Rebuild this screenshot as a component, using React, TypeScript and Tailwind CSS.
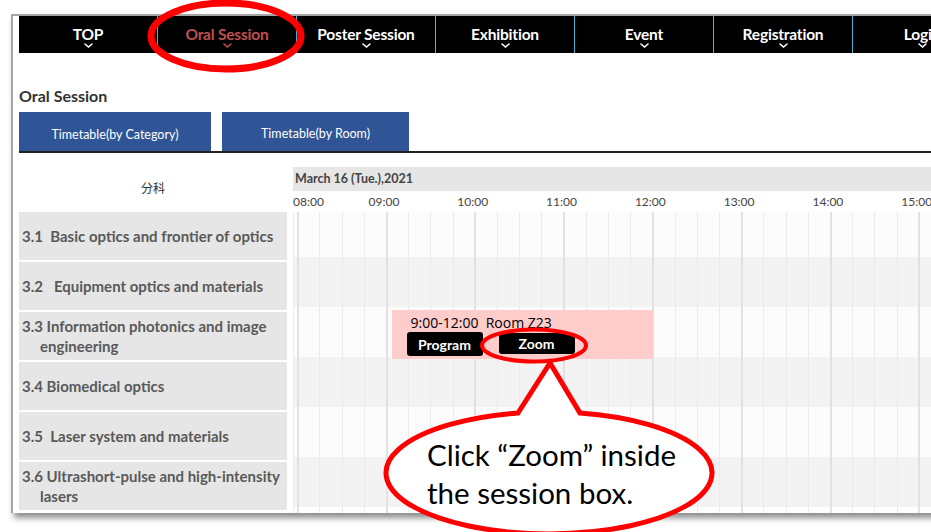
import React from 'react';

const NAV = ['TOP', 'Oral Session', 'Poster Session', 'Exhibition', 'Event', 'Registration', 'Login'];

const CATEGORIES = [
  { label: '3.1  Basic optics and frontier of optics' },
  { label: '3.2   Equipment optics and materials' },
  { label: '3.3 Information photonics and image engineering' },
  { label: '3.4 Biomedical optics' },
  { label: '3.5  Laser system and materials' },
  { label: '3.6 Ultrashort-pulse and high-intensity lasers' },
];

const HOURS = ['08:00', '09:00', '10:00', '11:00', '12:00', '13:00', '14:00', '15:00'];
const HOUR_W = 88.8;
const QUARTER_W = HOUR_W / 4;
const GRID_OFFSET = 4.7;

// x position of an hour line inside the chart
const hourX = (h: number) => GRID_OFFSET + (h - 8) * HOUR_W;

function Chevron({ color }: { color: string }) {
  return (
    <svg width="9" height="5" viewBox="0 0 9 5" className="mt-[1px]">
      <path d="M1 1 L4.5 4 L8 1" fill="none" stroke={color} strokeWidth="1.6" strokeLinecap="round" />
    </svg>
  );
}

function NavBar() {
  return (
    <div className="flex h-[37px] bg-black">
      {NAV.map((item) => {
        const active = item === 'Oral Session';
        const color = active ? '#c0504d' : '#ffffff';
        return (
          <div
            key={item}
            className="w-[139px] shrink-0 flex flex-col items-center justify-center border-r border-[#4bb4d6] pt-[5px]"
          >
            <span className="text-[15.5px] font-bold leading-[16px] tracking-[-0.2px]" style={{ color }}>
              {item}
            </span>
            <Chevron color={color} />
          </div>
        );
      })}
    </div>
  );
}

function Tabs() {
  return (
    <div className="flex items-stretch h-[39px] mt-[7px] border-b-2 border-[#222] box-content w-[920px]">
      <div className="w-[192px] bg-[#2f5597] text-white text-[12.5px] flex items-center justify-center pt-[8px]">
        Timetable(by Category)
      </div>
      <div className="w-[11px]" />
      <div className="w-[187px] bg-[#2f5597] text-white text-[12.5px] flex items-center justify-center pt-[6px]">
        Timetable(by Room)
      </div>
    </div>
  );
}

function GridLines() {
  const lines = Array.from({ length: 33 });
  return (
    <div className="absolute inset-0 overflow-hidden pointer-events-none">
      <div className="absolute top-0 bottom-0 left-0 w-px bg-[#ececec]" />
      {lines.map((_, i) => (
        <div
          key={i}
          className={i % 4 === 0 ? 'absolute top-0 bottom-0 w-[2px] bg-[#e2e2e2]' : 'absolute top-0 bottom-0 w-px bg-[#ebebeb]'}
          style={{ left: GRID_OFFSET + i * QUARTER_W - (i % 4 === 0 ? 1 : 0.5) }}
        />
      ))}
    </div>
  );
}

function SessionBox() {
  const left = hourX(9) + 5;
  const width = hourX(12) - left;
  return (
    <div
      className="absolute top-[98px] h-[49px] bg-[#ffcccc] pl-[15px] pt-[5px]"
      style={{ left, width }}
    >
      <div className="text-[14px] leading-[16px] text-black ml-[4px] whitespace-pre font-['Open_Sans',sans-serif]">
        9:00-12:00  Room Z23
      </div>
      <div className="flex gap-[16px] mt-[1px]">
        <div className="w-[76px] h-[24px] bg-black rounded-[3px] text-white text-[14px] font-bold flex items-center justify-center">
          Program
        </div>
        <div className="w-[76px] h-[21px] mt-[1px] bg-black rounded-[3px] text-white text-[14px] font-bold flex items-center justify-center">
          Zoom
        </div>
      </div>
    </div>
  );
}

function Timetable() {
  const rowBg = ['bg-[#fcfcfc]', 'bg-[#f3f3f3]'];
  const rowH = [45, 50, 50, 50, 50, 50];
  return (
    <div className="flex">
      {/* category column */}
      <div className="w-[268px] shrink-0">
        <div className="h-[59px] flex items-center justify-center pt-[11px] text-[12px] text-[#333] font-['Noto_Sans_CJK_JP',sans-serif]">
          分科
        </div>
        <div className="flex flex-col gap-[2px]">
          {CATEGORIES.map((c) => (
            <div
              key={c.label}
              className="h-[48px] bg-[#e6e6e6] flex items-center pl-[21px] [text-indent:-18px] text-[15px] leading-[20px] font-bold text-[#595959] whitespace-pre-wrap"
            >
              <span>{c.label}</span>
            </div>
          ))}
        </div>
      </div>

      {/* chart */}
      <div className="ml-[6px] flex-1">
        <div className="h-[59px] pt-[14px]">
          <div className="h-[24px] bg-[#e6e6e6] text-[12.5px] font-bold text-[#444] pl-[2px] pt-[4px] leading-[16px]">
            March 16 (Tue.),2021
          </div>
          <div className="flex text-[12px] text-[#444] leading-[14px] mt-[4px]">
            {HOURS.map((h, i) => (
              <div key={h} className={i === 0 ? 'w-[75.5px] shrink-0' : 'w-[88.8px] shrink-0'}>
                {h}
              </div>
            ))}
          </div>
        </div>
        <div className="relative h-[301px]">
          <div className="flex flex-col">
            {rowH.map((h, i) => (
              <div key={i} className={rowBg[i % 2]} style={{ height: h }} />
            ))}
          </div>
          <GridLines />
          <SessionBox />
        </div>
      </div>
    </div>
  );
}

function Annotations() {
  return (
    <>
      <svg width="931" height="532" className="absolute inset-0 pointer-events-none">
        <ellipse cx="226" cy="36" rx="75" ry="33" fill="none" stroke="#ff0000" strokeWidth="7" />
        <ellipse cx="534" cy="345.5" rx="52" ry="16" fill="none" stroke="#ff0000" strokeWidth="4" />
        <path
          d="M518 413 L550 363 L580 413 A163 61 0 1 1 518 413 Z"
          fill="#ffffff"
          stroke="#ff0000"
          strokeWidth="5"
          strokeLinejoin="miter"
        />
      </svg>
      <div className="absolute left-[427px] top-[436px] text-[29.5px] leading-[38px] text-black font-['Lato',sans-serif]">
        <div>Click “Zoom” inside</div>
        <div>the session box.</div>
      </div>
    </>
  );
}

export default function App() {
  return (
    <div className="relative w-[931px] h-[532px] overflow-hidden bg-white font-['Lato',sans-serif]">
      <div className="ml-[11px] mt-[14px] w-[940px] h-[499px] border-t-2 border-l-2 border-[#a6a6a6] bg-white pl-[6px] shadow-[3px_5px_6px_rgba(0,0,0,0.45)] overflow-hidden">
        <NavBar />
        <div className="mt-[34px] text-[16px] font-bold text-[#333] leading-[18px]">Oral Session</div>
        <Tabs />
        <Timetable />
      </div>
      <Annotations />
    </div>
  );
}
